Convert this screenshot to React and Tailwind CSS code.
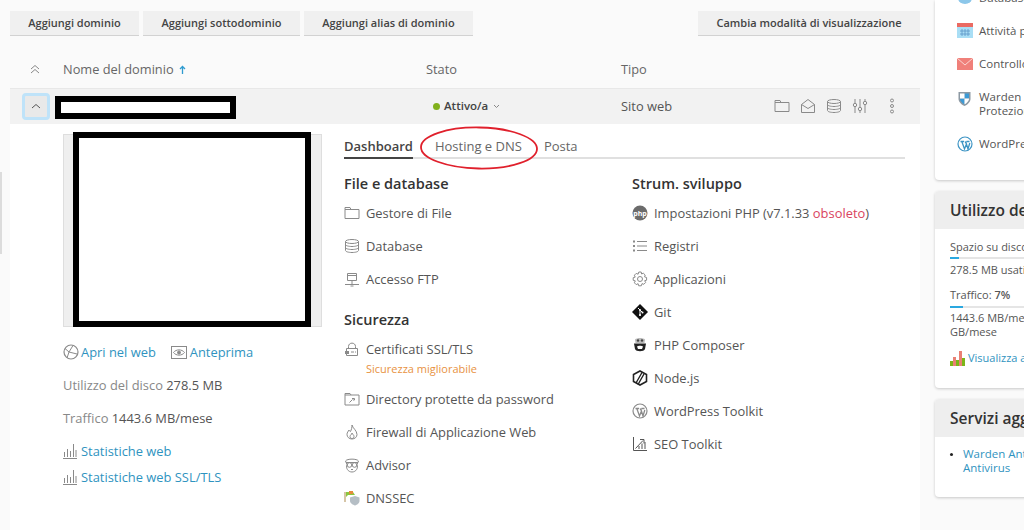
const Ico = ({ children, w = 16, h = 16, vb = '0 0 16 16', cls = 'text-[#8a8a8a]' }) => (
  <svg width={w} height={h} viewBox={vb} fill="none" stroke="currentColor" strokeWidth="1" className={'shrink-0 ' + cls}>
    {children}
  </svg>
)

const FolderIcon = () => <Ico><path d="M1 4.5V13.5H15V4.5H7L6 2.5H1V4.5H7" /></Ico>
const DbIcon = () => (
  <Ico>
    <ellipse cx="8" cy="3.5" rx="6.5" ry="2" />
    <path d="M1.5 3.5V12.5C1.5 13.6 4.4 14.5 8 14.5S14.5 13.6 14.5 12.5V3.5M1.5 6.5C1.5 7.6 4.4 8.5 8 8.5S14.5 7.6 14.5 6.5M1.5 9.5C1.5 10.6 4.4 11.5 8 11.5S14.5 10.6 14.5 9.5" />
  </Ico>
)
const FtpIcon = () => <Ico><path d="M3.5 2.5H12.5V9.5H3.5ZM3.5 4.5H12.5M8 9.5V13.5M1 13.5H15M6.5 15H9.5" /></Ico>
const LockIcon = () => (
  <Ico>
    <path d="M4.5 7V5.5C4.5 1 11.5 1 11.5 5.5V7M2.5 7.5H13.5V14.5H2.5Z" />
    <rect x="1" y="10" width="4" height="3" fill="currentColor" stroke="none" />
    <path d="M7 11H10M11 11H12" />
  </Ico>
)
const KeyFolderIcon = () => <Ico><path d="M1 4V14H15V4H7L6 2.5H1V4H7M5.5 11.5L8.5 8.5M8 7.5H10.5V9H9" /></Ico>
const FlameIcon = () => <Ico><path d="M8 1C8.5 4 13 6.5 13 10.5C13 13 10.8 15 8 15S3 13 3 10.5C3 8.5 4.2 7.5 5 6C5.5 7 6 7.5 6.5 7.5C7.5 5.5 8 3.5 8 1ZM8 9C8 10.5 6 11 6 12.5C6 13.5 7 14.5 8 14.5S10 13.5 10 12.5C10 11 8.5 10.5 8 9Z" /></Ico>
const AdvisorIcon = () => (
  <Ico>
    <path d="M1.5 4C3 1.5 13 1.5 14.5 4L13 7.5C14.5 11 12 15 8 15S1.5 11 3 7.5Z" />
    <circle cx="5.5" cy="8" r="2.3" />
    <circle cx="10.5" cy="8" r="2.3" />
    <path d="M2 5.5H14M7 12L8 13L9 12" />
  </Ico>
)
const DnssecIcon = () => (
  <Ico cls="text-[#9aa5ad]">
    <path d="M1 2V12" stroke="#c9b28a" strokeWidth="1.5" />
    <path d="M2 2H9L11 5H4L2 7Z" fill="#8cc63f" stroke="none" />
    <path d="M5 1H9V4H5Z" fill="#e58a3c" stroke="none" />
    <path d="M6 7.5L11 6L15.5 7.5V11C15.5 13 13 15 11 15.5C9 15 6 13 6 11Z" fill="#b5bec5" stroke="none" />
  </Ico>
)
const PhpIcon = () => (
  <svg width="16" height="16" viewBox="0 0 16 16" className="shrink-0">
    <circle cx="8" cy="8" r="7.5" fill="#6b6b6b" />
    <text x="8" y="10.5" fontSize="7" fontWeight="700" textAnchor="middle" fill="#fff" fontFamily="Open Sans">php</text>
  </svg>
)
const ListIcon = () => <Ico><path d="M5 3.5H15M5 8H15M5 12.5H15" /><path d="M1 3.5H3M1 8H3M1 12.5H3" strokeWidth="2" /></Ico>
const GearIcon = () => (
  <Ico>
    <circle cx="8" cy="8" r="2.5" />
    <path d="M6.8 1H9.2L9.6 3L11.3 2.2L13.2 4L12.6 5.9L14.6 6.5V9.2L12.7 9.7L13.6 11.5L11.8 13.3L10 12.6L9.3 14.8H6.7L6.1 12.7L4.2 13.6L2.4 11.8L3.3 9.9L1.2 9.3V6.7L3.2 6.1L2.4 4.2L4.2 2.4L6.1 3.2Z" />
  </Ico>
)
const GitIcon = () => (
  <svg width="16" height="16" viewBox="0 0 16 16" className="shrink-0">
    <path d="M8 0L16 8L8 16L0 8Z" fill="#111" />
    <path d="M6 4L10.5 8.5M8 6.5V12" stroke="#fff" strokeWidth="1" />
    <circle cx="8" cy="6" r="1" fill="#fff" />
    <circle cx="8" cy="11" r="1" fill="#fff" />
    <circle cx="10.5" cy="8.5" r="1" fill="#fff" />
  </svg>
)
const ComposerIcon = () => (
  <svg width="16" height="16" viewBox="0 0 16 16" className="shrink-0">
    <path d="M3 2.5C5 0.5 11 0.5 13 2.5L12.5 6H3.5Z" fill="#bbb" />
    <circle cx="6" cy="3.5" r="1.2" fill="#444" />
    <circle cx="10" cy="3.5" r="1.2" fill="#444" />
    <path d="M2 6.5H14L13 12C12 15 4 15 3 12Z" fill="#222" />
    <path d="M5 9.5C6 8.5 10 8.5 11 9.5L10 12H6Z" fill="#fff" />
  </svg>
)
const NodeIcon = () => (
  <svg width="16" height="16" viewBox="0 0 16 16" className="shrink-0">
    <path d="M8 1L14.5 4.5V11.5L8 15L1.5 11.5V4.5Z" fill="#fff" stroke="#222" strokeWidth="1.6" />
    <path d="M10 2.5L4 13M12 4L6 14.5" stroke="#222" strokeWidth="1.4" />
  </svg>
)
const WpIcon = ({ cls = 'text-[#8a8a8a]' }) => (
  <Ico cls={cls}>
    <circle cx="8" cy="8" r="7" strokeWidth="1.2" />
    <path d="M3.5 5.5H7M9.5 5.5H12.5M4.8 5.5L7.5 13L9.5 8L8 5.5M8.6 5.5L11 13L12.8 7" strokeWidth="1.3" />
  </Ico>
)
const SeoIcon = () => <Ico cls="text-[#555]"><path d="M1.5 1V14.5H15M3.5 12.5L11 4.5M8 3.5H12V7.5M7 13V10M10 13V7.5M13 13V6" /></Ico>
const GlobeIcon = () => (
  <Ico>
    <circle cx="8" cy="8" r="7" strokeWidth="1.2" />
    <path d="M2 4.5L6 8L4 14M6 8L14 10M6 8L10 1.5" />
  </Ico>
)
const EyeIcon = () => (
  <Ico w={16} h={13} vb="0 0 16 13">
    <rect x="0.5" y="0.5" width="15" height="12" />
    <path d="M2.5 6.5C5 3 11 3 13.5 6.5C11 10 5 10 2.5 6.5Z" />
    <circle cx="8" cy="6.5" r="1.5" fill="currentColor" />
  </Ico>
)
const BarsIcon = () => <Ico w={14} h={16} vb="0 0 14 16"><path d="M0 15.5H14M1.5 14V9M4.5 14V6M7.5 14V8M10.5 14V1M13 14V7" /></Ico>

function Item({ icon, children, sub }) {
  return (
    <div className={sub ? 'h-[52px] pt-[10px]' : 'h-[33px] flex items-center'}>
      <div className="flex items-center">
        <span className="w-[22px] shrink-0 flex items-center">{icon}</span>
        <span className="text-[#555]">{children}</span>
      </div>
      {sub && <div className="ml-[22px] mt-[3px] text-[11px] leading-[16px] text-[#e8923f]">{sub}</div>}
    </div>
  )
}

function ToolbarBtn({ children, cls = '' }) {
  return (
    <button className={'h-[25px] bg-[#f0f0f0] border-b border-[#d2d2d2] text-[11px] font-semibold text-[#444] ' + cls}>
      {children}
    </button>
  )
}

function Card({ title, children, cls = '' }) {
  return (
    <div className={'w-[110px] rounded-[4px] bg-white shadow-[0_1px_3px_rgba(0,0,0,0.2)] overflow-hidden ' + cls}>
      <div className="h-[38px] bg-[#eeeeee] pl-[15px] flex items-center text-[15.5px] font-semibold text-[#333] whitespace-nowrap">{title}</div>
      {children}
    </div>
  )
}

function SideRow({ icon, children }) {
  return (
    <div className="h-[33px] flex items-center whitespace-nowrap text-[#555] text-[11.5px]">
      <span className="w-[22px] shrink-0 flex">{icon}</span>
      <span>{children}</span>
    </div>
  )
}

export default function App() {
  return (
    <div className="relative w-[1024px] h-[530px] overflow-hidden flex bg-[#fafafa] text-[12.9px] leading-[18px] text-[#555]" style={{ fontFamily: '"Open Sans", sans-serif' }}>
      <div className="absolute left-0 top-[172px] w-[2px] h-[82px] bg-[#dcdcdc]" />

      {/* main column */}
      <div className="ml-[10px] w-[910px] shrink-0">
        <div className="pt-[11px] flex">
          <ToolbarBtn cls="w-[129px]">Aggiungi dominio</ToolbarBtn>
          <ToolbarBtn cls="w-[157px] ml-[4px]">Aggiungi sottodominio</ToolbarBtn>
          <ToolbarBtn cls="w-[169px] ml-[4px]">Aggiungi alias di dominio</ToolbarBtn>
          <ToolbarBtn cls="w-[222px] ml-auto">Cambia modalità di visualizzazione</ToolbarBtn>
        </div>

        <div className="mt-[19px] h-[33px] pb-[5px] grid grid-cols-[53px_363px_195px_1fr] items-center text-[#666] text-[12.8px]">
          <span className="pl-[19px]">
            <svg width="12" height="12" viewBox="0 0 12 12" fill="none" stroke="#888" className="block">
              <path d="M2 6L6 2.5L10 6M2 10L6 6.5L10 10" />
            </svg>
          </span>
          <span className="flex items-center gap-[5px]">
            Nome del dominio
            <svg width="7" height="9" viewBox="0 0 7 9" fill="none" stroke="#2f9bd0" strokeWidth="1.3">
              <path d="M3.5 9V1.5M1 4L3.5 1.5L6 4" />
            </svg>
          </span>
          <span>Stato</span>
          <span>Tipo</span>
        </div>

        <div className="h-[36px] pb-[1px] bg-[#f2f2f2] border-t border-[#e8e8e8] grid grid-cols-[53px_363px_195px_1fr] items-center">
          <span className="pl-[12px]">
            <span className="w-[28px] h-[27px] rounded-[4px] bg-[#e9e9e9] border-[3px] border-[#bfe3f9] flex items-center justify-center">
              <svg width="10" height="6" viewBox="0 0 10 6" fill="none" stroke="#555"><path d="M1 5L5 1.5L9 5" /></svg>
            </span>
          </span>
          <span />
          <span className="flex items-center text-[11.5px] font-semibold text-[#444]">
            <span className="ml-[7px] w-[7px] h-[7px] rounded-full bg-[#81b01c] mr-[4px]" />
            Attivo/a
            <svg width="7" height="5" viewBox="0 0 7 5" fill="none" stroke="#888" className="ml-[5px]"><path d="M1 1L3.5 3.5L6 1" /></svg>
          </span>
          <div className="flex items-center">
            <span className="text-[#555] w-[153px]">Sito web</span>
            <span className="flex items-center gap-[10px]">
              <FolderIcon />
              <Ico><path d="M1.5 6.5L8 1.5L14.5 6.5V14.5H1.5ZM1.5 6.5L8 10.5L14.5 6.5" /></Ico>
              <DbIcon />
              <Ico><path d="M3 1V5M3 9V15M8 1V9M8 13V15M13 1V3M13 7V15" /><circle cx="3" cy="7" r="1.7" /><circle cx="8" cy="11" r="1.7" /><circle cx="13" cy="5" r="1.7" /></Ico>
              <Ico cls="text-[#8a8a8a] ml-[6px]"><circle cx="8" cy="2.5" r="1.5" /><circle cx="8" cy="8" r="1.5" /><circle cx="8" cy="13.5" r="1.5" /></Ico>
            </span>
          </div>
        </div>

        {/* row details */}
        <div className="h-[406px] bg-white flex">
          <div className="ml-[53px] w-[259px] shrink-0 pt-[10px]">
            <div className="h-[193px] bg-[#efefef] border border-[#dedede]" />
            <div className="mt-[16px] flex items-center text-[#2f93c0]">
              <GlobeIcon />
              <span className="ml-[2px]">Apri nel web</span>
              <span className="ml-[15px] mr-[3px] flex"><EyeIcon /></span>
              <span>Anteprima</span>
            </div>
            <div className="mt-[15px] text-[#888]">Utilizzo del disco <span className="text-[#555]">278.5 MB</span></div>
            <div className="mt-[15px] text-[#888]">Traffico <span className="text-[#555]">1443.6 MB/mese</span></div>
            <div className="mt-[15px] flex items-center gap-[4px] text-[#2f93c0]"><BarsIcon />Statistiche web</div>
            <div className="mt-[8px] flex items-center gap-[4px] text-[#2f93c0]"><BarsIcon />Statistiche web SSL/TLS</div>
          </div>

          <div className="ml-[22px] w-[561px] shrink-0">
            <div className="h-[35px] border-b-2 border-[#e0e0e0] flex items-end text-[13px]">
              <span className="h-[22px] border-b-2 border-[#444] -mb-[2px] font-semibold text-[#444]">Dashboard</span>
              <span className="h-[20px] ml-[22px] font-medium text-[#666]">Hosting e DNS</span>
              <span className="h-[20px] ml-[22px] font-medium text-[#666]">Posta</span>
            </div>
            <div className="flex">
              <div className="w-[288px] shrink-0">
                <div className="mt-[16px] mb-[3px] text-[14.5px] font-semibold text-[#333]">File e database</div>
                <Item icon={<FolderIcon />}>Gestore di File</Item>
                <Item icon={<DbIcon />}>Database</Item>
                <Item icon={<FtpIcon />}>Accesso FTP</Item>
                <div className="mt-[16px] mb-[1px] text-[14.5px] font-semibold text-[#333]">Sicurezza</div>
                <Item icon={<LockIcon />} sub="Sicurezza migliorabile">Certificati SSL/TLS</Item>
                <Item icon={<KeyFolderIcon />}>Directory protette da password</Item>
                <Item icon={<FlameIcon />}>Firewall di Applicazione Web</Item>
                <Item icon={<AdvisorIcon />}>Advisor</Item>
                <Item icon={<DnssecIcon />}>DNSSEC</Item>
              </div>
              <div className="flex-1">
                <div className="mt-[16px] mb-[3px] text-[14.5px] font-semibold text-[#333]">Strum. sviluppo</div>
                <Item icon={<PhpIcon />}>Impostazioni PHP (v7.1.33 <span className="text-[#d9435e]">obsoleto</span>)</Item>
                <Item icon={<ListIcon />}>Registri</Item>
                <Item icon={<GearIcon />}>Applicazioni</Item>
                <Item icon={<GitIcon />}>Git</Item>
                <Item icon={<ComposerIcon />}>PHP Composer</Item>
                <Item icon={<NodeIcon />}>Node.js</Item>
                <Item icon={<WpIcon />}>WordPress Toolkit</Item>
                <Item icon={<SeoIcon />}>SEO Toolkit</Item>
              </div>
            </div>
          </div>
        </div>
      </div>

      {/* sidebar, runs off the right edge */}
      <div className="ml-[15px] shrink-0">
        <div className="w-[110px] h-[180px] rounded-b-[4px] bg-white shadow-[0_1px_3px_rgba(0,0,0,0.2)] pl-[22px] overflow-hidden">
          <div className="-mt-[19px]">
            <SideRow icon={<svg width="16" height="16" viewBox="0 0 16 16"><ellipse cx="8" cy="8" rx="7" ry="6" fill="#8cc7ea" /></svg>}>Database</SideRow>
            <SideRow icon={<svg width="16" height="15" viewBox="0 0 16 15"><rect y="3" width="16" height="12" fill="#a9def5" /><rect width="16" height="4" fill="#ea6a62" /><path d="M5 6V13M8 6V13M11 6V13M3 8H13M3 11H13" stroke="#5b95c7" strokeWidth="0.8" /></svg>}>Attività pianificate</SideRow>
            <SideRow icon={<svg width="16" height="12" viewBox="0 0 16 12"><rect width="16" height="12" fill="#f0807a" /><path d="M0 0L8 7L16 0" stroke="#fbd5d2" fill="none" /></svg>}>Controllo posta</SideRow>
            <div className="flex mt-[10px] h-[37px] items-start whitespace-nowrap text-[#555] text-[11.5px] leading-[14px]">
              <span className="w-[22px] shrink-0 flex pt-[1px]">
                <svg width="15" height="15" viewBox="0 0 15 15"><path d="M1.5 1H13.5V8C13.5 11 10 14 7.5 15C5 14 1.5 11 1.5 8Z" fill="#8d99a3" /><path d="M7.5 2.5H12V7.5H7.5ZM7.5 7.5H3V8C3 10 5.5 12.5 7.5 13.3Z" fill="#3b9ad6" /><path d="M7.5 2.5H3V7.5H7.5ZM7.5 7.5H12V8C12 10 9.5 12.5 7.5 13.3Z" fill="#fff" /></svg>
              </span>
              <span>Warden Anti-spam<br />Protezione</span>
            </div>
            <SideRow icon={<WpIcon cls="text-[#3d94c4]" />}>WordPress</SideRow>
          </div>
        </div>

        <Card title="Utilizzo delle risorse" cls="mt-[11px] h-[197px]">
          <div className="pl-[15px] pt-[10px] text-[11px] leading-[16px] text-[#555] whitespace-nowrap">
            <div>Spazio su disco: 3%</div>
            <div className="mt-[2px] h-[2px] bg-[#e5e5e5]"><div className="h-[2px] w-[9px] bg-[#2aa8e0]" /></div>
            <div className="mt-[3px]">278.5 MB usati di 10 GB</div>
            <div className="mt-[9px]">Traffico: <span className="font-semibold">7%</span></div>
            <div className="mt-[3px] h-[2px] bg-[#e5e5e5]"><div className="h-[2px] w-[13px] bg-[#2aa8e0]" /></div>
            <div className="mt-[3px] leading-[14px]">1443.6 MB/mese di 20<br />GB/mese</div>
            <div className="mt-[11px] flex items-center text-[#2f93c0]">
              <svg width="16" height="16" viewBox="0 0 16 16" className="shrink-0 mr-[2px]">
                <rect x="0" y="11" width="3" height="5" fill="#7cb518" />
                <rect x="3" y="7" width="3" height="9" fill="#e98074" />
                <rect x="6" y="10" width="3" height="6" fill="#7cb518" />
                <rect x="9" y="1" width="3" height="15" fill="#e98074" />
                <rect x="12" y="8" width="3" height="8" fill="#7cb518" />
              </svg>
              Visualizza altre statistiche
            </div>
          </div>
        </Card>

        <Card title="Servizi aggiuntivi" cls="mt-[11px] h-[98px]">
          <div className="pl-[15px] pt-[10px] flex text-[11.5px] leading-[14px] text-[#2f93c0] whitespace-nowrap">
            <span className="w-[3px] h-[3px] mt-[6px] mr-[10px] rounded-full bg-[#222] shrink-0" />
            <span>Warden Anti-spam e<br />Antivirus</span>
          </div>
        </Card>
      </div>

      {/* redaction boxes and the red circle drawn over the screenshot */}
      <div className="absolute left-[55px] top-[96px] w-[181px] h-[23px] bg-white border-[6px] border-black" />
      <div className="absolute left-[73px] top-[132px] w-[238px] h-[195px] bg-white border-[6px] border-black" />
      <svg width="124" height="46" viewBox="0 0 124 46" fill="none" className="absolute left-[419px] top-[126px]">
        <ellipse cx="60" cy="22" rx="58" ry="20.5" stroke="#e0202c" strokeWidth="1.8" transform="rotate(1 60 22)" />
      </svg>
    </div>
  )
}
